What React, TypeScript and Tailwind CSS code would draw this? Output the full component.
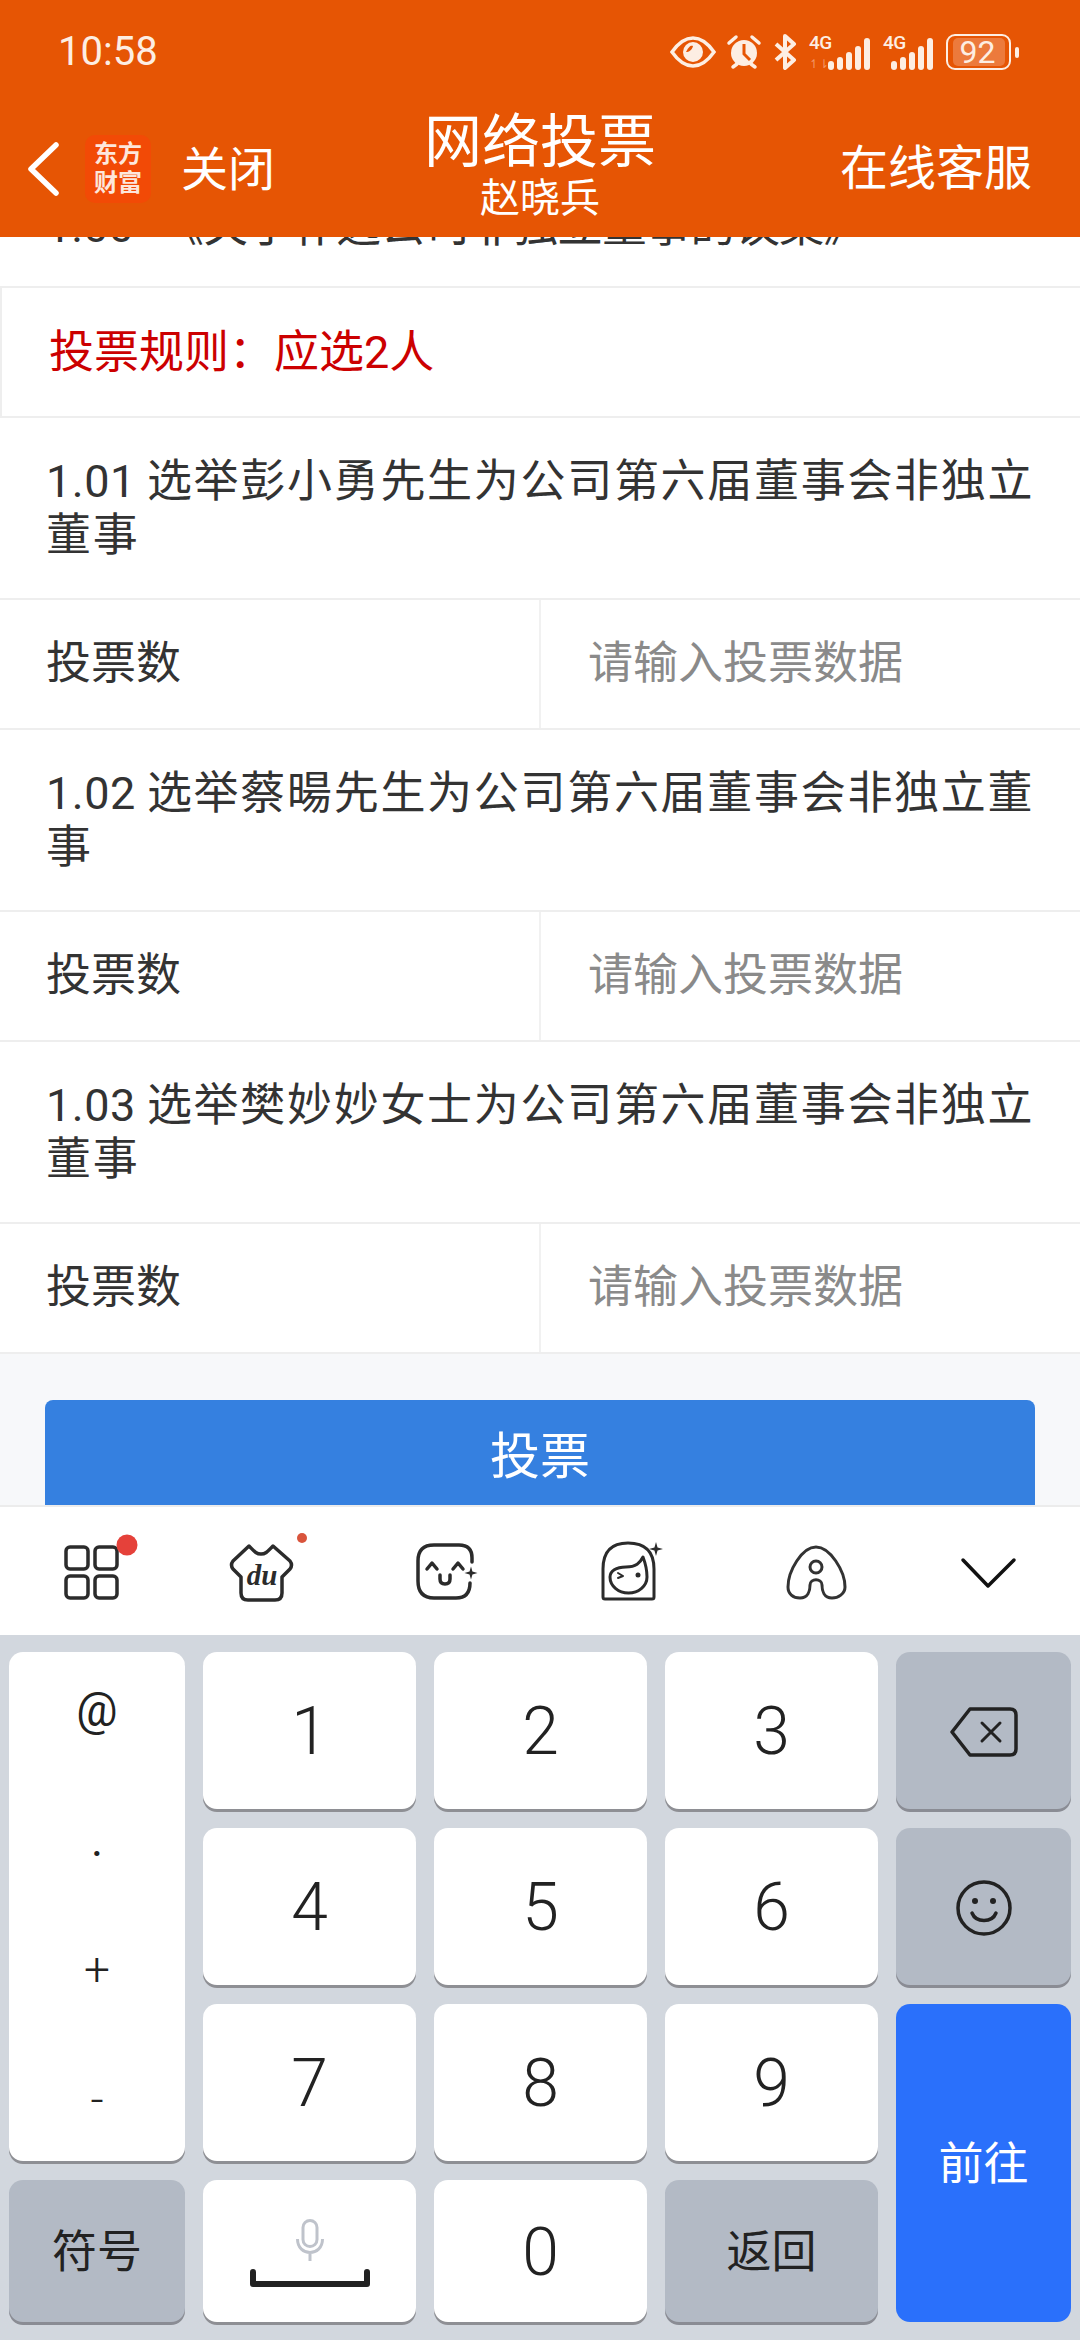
import { ReactNode } from "react";

const font = "font-['Roboto','Noto_Sans_CJK_SC',sans-serif]";

const candidates = [
  { no: "1.01", title: "选举彭小勇先生为公司第六届董事会非独立董事" },
  { no: "1.02", title: "选举蔡暘先生为公司第六届董事会非独立董事" },
  { no: "1.03", title: "选举樊妙妙女士为公司第六届董事会非独立董事" },
];

const signalBars = [9, 13, 18, 24, 32];

function Sparkle({ x, y, r }: { x: number; y: number; r: number }) {
  const k = r * 0.22;
  return (
    <path
      d={`M${x} ${y - r}L${x + k} ${y - k}L${x + r} ${y}L${x + k} ${y + k}L${x} ${y + r}L${x - k} ${y + k}L${x - r} ${y}L${x - k} ${y - k}Z`}
      fill="#2b2b2b"
      stroke="none"
    />
  );
}

function Signal({ mr, arrows, pl }: { mr: string; arrows?: boolean; pl: string }) {
  return (
    <div className={`relative flex h-[36px] items-end gap-[3px] ${mr} ${pl}`}>
      <span className="absolute left-0 top-0 text-[19px] font-medium leading-[17px] tracking-[-0.5px]">4G</span>
      {arrows && <span className="absolute bottom-0 left-0 text-[12px] leading-[12px] text-[#f29566]">↿⇂</span>}
      {signalBars.map((h, i) => (
        <div key={i} className="w-[6px] rounded-full bg-[#fdeee3]" style={{ height: h }} />
      ))}
    </div>
  );
}

function StatusIcons() {
  return (
    <div className="flex items-center text-[#fdeee3]">
      <svg width="46" height="32" viewBox="0 0 46 32" className="mr-[10px]" fill="none">
        <path d="M2 16C9 6 15 2 23 2s14 4 21 14c-7 10-13 14-21 14S9 26 2 16Z" stroke="currentColor" strokeWidth="3.5" />
        <circle cx="23" cy="16" r="10" fill="currentColor" />
        <path d="M23 10c-1 4-4 6-7 6 3-6 5-7 7-6Z" fill="#e65504" />
      </svg>
      <svg width="36" height="36" viewBox="0 0 36 36" className="mr-[11px]" fill="none">
        <circle cx="18" cy="19" r="13" fill="currentColor" />
        <path d="M18 10v10l6 6" stroke="#e65504" strokeWidth="3" />
        <path d="M3 9l7-6M33 9l-7-6M7 33l4-3M29 33l-4-3" stroke="currentColor" strokeWidth="3.5" strokeLinecap="round" />
      </svg>
      <svg width="24" height="36" viewBox="0 0 24 36" className="mr-[12px]" fill="none">
        <path d="M3 10l18 16-9 8V2l9 8L3 26" stroke="currentColor" strokeWidth="4" strokeLinejoin="round" />
      </svg>
      <Signal mr="mr-[13px]" pl="pl-[19px]" arrows />
      <Signal mr="mr-[13px]" pl="pl-[8px]" />
      <div className="relative flex h-[36px] w-[65px] items-center justify-center rounded-[9px] border-[2.5px] border-[#fdeee3] p-[2px]">
        <div className="flex h-full w-[52px] items-center justify-center rounded-[5px] bg-[#ec7a3c] pr-[2px] text-[32px] leading-none">
          92
        </div>
        <div className="absolute -right-[10px] h-[11px] w-[4px] rounded-full bg-[#fdeee3]" />
      </div>
    </div>
  );
}

function Candidate({ no, title }: { no: string; title: string }) {
  return (
    <>
      <div className="shrink-0 border-b-2 border-[#eeeeee] bg-white pb-[35px] pl-[46px] pr-[40px] pt-[37px] text-[45px] leading-[54px] text-[#333333]">
        <span className="tracking-[0.5px]">{no}</span> <span className="tracking-[1.7px]">{title}</span>
      </div>
      <div className="flex h-[130px] shrink-0 border-b-2 border-[#eeeeee] bg-white text-[45px]">
        <div className="flex w-[541px] items-center border-r-2 border-[#f1f1f1] pl-[46px] text-[#333333]">投票数</div>
        <div className="flex flex-1 items-center pl-[47px] text-[#8a8a8a]">请输入投票数据</div>
      </div>
    </>
  );
}

function ToolbarIcons() {
  const cell = "flex items-center justify-center";
  const stroke = { fill: "none", stroke: "#2b2b2b", strokeWidth: 3.5, strokeLinecap: "round", strokeLinejoin: "round" } as const;
  return (
    <div className="grid h-[130px] shrink-0 grid-cols-6 border-t-2 border-[#ececec] bg-white">
      <div className={cell}>
        <svg width="80" height="80" viewBox="0 0 80 80" className="overflow-visible">
          <g {...stroke}>
            <rect x="16" y="16" width="22" height="22" rx="4" />
            <rect x="45" y="16" width="22" height="22" rx="4" />
            <rect x="16" y="45" width="22" height="22" rx="4" />
            <rect x="45" y="45" width="22" height="22" rx="4" />
          </g>
          <circle cx="77" cy="14" r="10.5" fill="#e5413a" />
        </svg>
      </div>
      <div className={cell}>
        <svg width="80" height="80" viewBox="0 0 80 80" className="overflow-visible">
          <path
            {...stroke}
            d="M19 15C24 20 26 23 31 23C36 23 38 20 43 15L60 30Q63 34 60 38L52 46V62Q52 69 45 69H18Q11 69 11 62V46L3 38Q0 34 3 30Z"
          />
          <text x="32" y="54" textAnchor="middle" fontFamily="'Liberation Serif', serif" fontStyle="italic" fontWeight="700" fontSize="29" fill="#2b2b2b">
            du
          </text>
          <circle cx="72" cy="7" r="5" fill="#d9543c" />
        </svg>
      </div>
      <div className={cell}>
        <svg width="80" height="80" viewBox="0 0 80 80" className="overflow-visible">
          <g {...stroke}>
            <path d="M62 31V27Q62 14 49 14H24Q8 14 8 30V50Q8 67 24 67H46Q60 67 60 52" />
            <path d="M17 38L22 32L27 38M43 38L48 32L53 38M30 44V48Q30 53 35 53Q40 53 40 48V44" />
          </g>
          <Sparkle x={61} y={42} r={6.5} />
        </svg>
      </div>
      <div className={cell}>
        <svg width="80" height="80" viewBox="0 0 80 80" className="overflow-visible">
          <g {...stroke} strokeWidth={3}>
            <path d="M15 68H62Q64 68 64 66V38Q64 12 38 12Q13 12 13 38V66Q13 68 15 68Z" />
            <path d="M20 46C20 40 26 36 36 36C46 36 50 32 53 26C56 34 57 40 57 46A18.5 16 0 0 1 20 46Z" />
            <path d="M28 42L33 45L28 47" strokeWidth="2" />
          </g>
          <circle cx="48" cy="44" r="2.5" fill="#2b2b2b" />
          <Sparkle x={66} y={18} r={7} />
        </svg>
      </div>
      <div className={cell}>
        <svg width="80" height="80" viewBox="0 0 80 80" className="overflow-visible">
          <g {...stroke} stroke="#333333" strokeWidth={3}>
            <path d="M46 16C60 16 75 40 75 56C75 63 68 67 62 67C54 67 52 60 52 54C52 47 40 47 40 54C40 60 38 67 30 67C23 67 18 63 18 56C18 40 32 16 46 16Z" />
            <circle cx="46" cy="36" r="6" />
          </g>
        </svg>
      </div>
      <div className={cell}>
        <svg width="80" height="80" viewBox="0 0 80 80" className="overflow-visible">
          <path d="M13 29L38 55L64 29" fill="none" stroke="#111111" strokeWidth="3.5" strokeLinecap="round" strokeLinejoin="round" />
        </svg>
      </div>
    </div>
  );
}

function Key({ children, gray, className = "" }: { children: ReactNode; gray?: boolean; className?: string }) {
  return (
    <div
      className={`flex items-center justify-center rounded-[14px] pt-[3px] text-[#222222] ${
        gray ? "bg-[#b3bac5] shadow-[0_3px_0_#8a8c94]" : "bg-white shadow-[0_3px_0_#8e8f94]"
      } ${className}`}
    >
      {children}
    </div>
  );
}

function Digit({ n }: { n: string }) {
  return (
    <Key>
      <span className="text-[66px] font-light leading-none">{n}</span>
    </Key>
  );
}

function Keyboard() {
  return (
    <div className="grid h-[705px] shrink-0 grid-cols-[176px_213px_213px_213px_175px] grid-rows-[157px_157px_157px_142px] gap-x-[18px] gap-y-[19px] bg-[#d2d7de] pl-[9px] pt-[17px]">
      <Key className="row-span-3">
        <div className="flex h-full flex-col items-center justify-between pb-[38px] pt-[31px] text-[46px] font-light leading-[48px]">
          <span className="font-normal">@</span>
          <span className="font-normal">.</span>
          <span>+</span>
          <span>-</span>
        </div>
      </Key>
      <Digit n="1" />
      <Digit n="2" />
      <Digit n="3" />
      <Key gray>
        <svg width="68" height="50" viewBox="0 0 68 50" fill="none" stroke="#222222" strokeWidth="3.5" strokeLinejoin="round" strokeLinecap="round">
          <path d="M20 2H60Q66 2 66 8V42Q66 48 60 48H20L2 25Z" />
          <path d="M32 16L50 34M50 16L32 34" strokeWidth="3" />
        </svg>
      </Key>
      <Digit n="4" />
      <Digit n="5" />
      <Digit n="6" />
      <Key gray>
        <svg width="58" height="58" viewBox="0 0 58 58" fill="none" stroke="#222222" strokeWidth="3.5" strokeLinecap="round">
          <circle cx="29" cy="29" r="26" />
          <path d="M17 34C21 44 37 44 41 34" />
          <circle cx="20" cy="22" r="3" fill="#222222" stroke="none" />
          <circle cx="38" cy="22" r="3" fill="#222222" stroke="none" />
        </svg>
      </Key>
      <Digit n="7" />
      <Digit n="8" />
      <Digit n="9" />
      <div className="row-span-2 flex items-center justify-center rounded-[14px] bg-[#2a70fb] pt-[3px] text-[45px] text-white">
        前往
      </div>
      <Key gray className="text-[45px]">
        符号
      </Key>
      <Key className="flex-col">
        <svg width="28" height="42" viewBox="0 0 28 42" fill="none" stroke="#bfc3cb" strokeWidth="3">
          <rect x="7" y="1.5" width="14" height="26" rx="7" />
          <path d="M1.5 20C1.5 38 26.5 38 26.5 20M14 33V42" />
        </svg>
        <svg width="120" height="18" viewBox="0 0 120 18" className="mt-[8px]" fill="none" stroke="#222222" strokeWidth="6" strokeLinecap="round">
          <path d="M3 3V15H117V3" strokeLinejoin="round" />
        </svg>
      </Key>
      <Digit n="0" />
      <Key gray className="text-[45px]">
        返回
      </Key>
    </div>
  );
}

export default function App() {
  return (
    <div className={`flex h-[2340px] w-[1080px] flex-col overflow-hidden bg-white ${font}`}>
      <header className="relative z-10 h-[237px] shrink-0 bg-[#e65504] text-white">
        <div className="flex h-[104px] items-center justify-between pl-[58px] pr-[69px] text-[#fdeee3]">
          <span className="text-[40px] leading-none">10:58</span>
          <StatusIcons />
        </div>
        <div className="grid grid-cols-[1fr_auto_1fr] items-center px-[27px]">
          <div className="flex items-center pt-[12px]">
            <svg width="32" height="54" viewBox="0 0 32 54" fill="none" stroke="#ffffff" strokeWidth="5.5" strokeLinecap="round" strokeLinejoin="round">
              <path d="M29 3L4 27L29 51" />
            </svg>
            <div className="ml-[26px] flex h-[68px] w-[66px] items-center justify-center rounded-[10px] bg-[#f24a06] text-center text-[24px] font-bold leading-[29px] text-[#fde7dc]">
              东方
              <br />
              财富
            </div>
            <span className="ml-[30px] text-[47px] leading-none">关闭</span>
          </div>
          <div className="flex flex-col items-center pt-[4px]">
            <span className="text-[58px] leading-[68px]">网络投票</span>
            <span className="text-[40px] leading-[46px]">赵晓兵</span>
          </div>
          <span className="justify-self-end pr-[21px] pt-[12px] text-[48px] leading-none">在线客服</span>
        </div>
      </header>

      <main className="flex min-h-0 flex-1 flex-col overflow-hidden bg-[#f7f8fa]">
        <div className="flex h-[51px] shrink-0 flex-col justify-end border-b-2 border-[#eeeeee] bg-white px-[46px] pb-[33px] text-[45px] leading-[53px] text-[#333333]">
          <p className="whitespace-nowrap">
            1.00 <span className="ml-[14px] tracking-[-0.7px]">《关于补选公司非独立董事的议案》</span>
          </p>
        </div>
        <div className="flex h-[130px] shrink-0 items-center border-b-2 border-l-2 border-[#eeeeee] bg-white pl-[47px] pt-[2px] text-[45px] text-[#cc0000]">
          投票规则：应选2人
        </div>
        {candidates.map((c) => (
          <Candidate key={c.no} no={c.no} title={c.title} />
        ))}
        <div className="mx-[45px] mt-[46px] flex h-[110px] shrink-0 items-center justify-center rounded-t-[8px] bg-[#3580e0] pt-[5px] text-[50px] text-white">
          投票
        </div>
      </main>

      <ToolbarIcons />
      <Keyboard />
    </div>
  );
}
